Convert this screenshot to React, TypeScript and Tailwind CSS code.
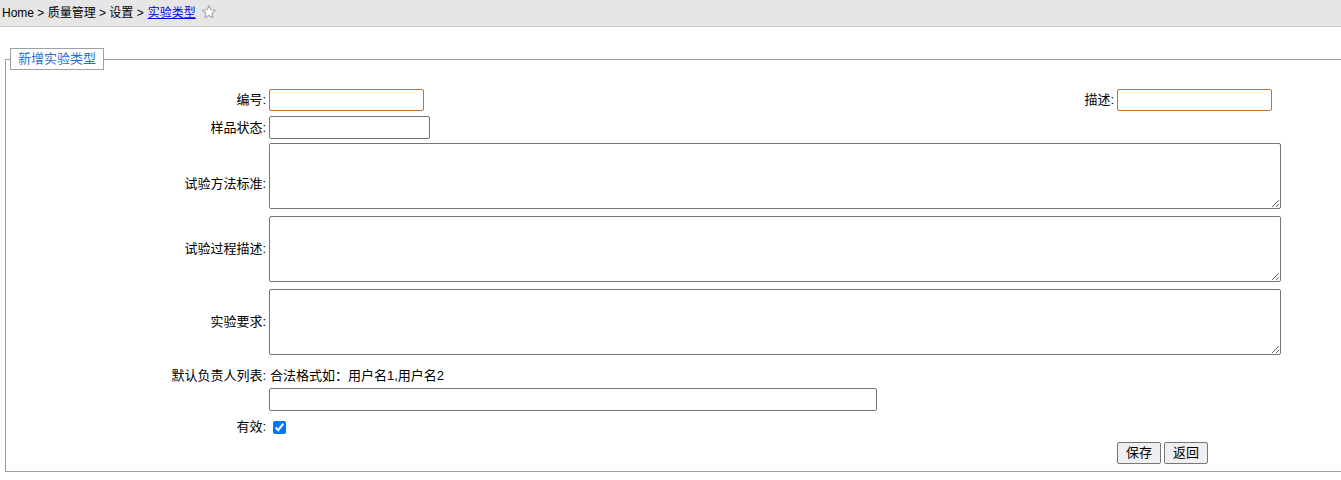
import React from 'react';

const font = { fontFamily: '"Liberation Sans", "Noto Sans CJK SC", sans-serif' };

const Label = ({ text, className = '' }: { text: string; className?: string }) => (
    <span className={`w-[260px] shrink-0 text-right text-[13px] text-black ${className}`}>{text}</span>
);

export default function App() {
    return (
        <div className="w-[1341px] h-[480px] overflow-hidden bg-white text-[12px] text-black" style={font}>
            {/* breadcrumb bar */}
            <div className="h-[27px] bg-[#e6e6e6] border-b border-[#cccccc] flex items-center pl-[2px]">
                <span>Home &gt; 质量管理 &gt; 设置 &gt; </span>
                <a className="ml-[4px] text-[#0000ee] underline decoration-[#0000ee]">实验类型</a>
                <svg width="16" height="16" viewBox="0 0 24 24" className="ml-[5px] -mt-[3px]">
                    <path
                        d="M12 2.5l2.9 6.1 6.6.8-4.9 4.6 1.3 6.6L12 17.3l-5.9 3.3 1.3-6.6-4.9-4.6 6.6-.8z"
                        fill="#ffffff"
                        stroke="#a8a8a8"
                        strokeWidth="1.8"
                        strokeLinejoin="round"
                    />
                </svg>
            </div>

            <fieldset className="ml-[5px] mt-[21px] w-[1360px] border border-[#a0a0a0]">
                <legend className="ml-[4px] px-[7px] h-[22px] leading-[20px] border border-[#a0a0a0] text-[13px] text-[#1f6fd6] bg-white">
                    新增实验类型
                </legend>

                <div className="flex flex-col pt-[19px] pb-[7px]">
                    {/* 编号 / 描述 */}
                    <div className="flex items-center gap-[3px] h-[22px]">
                        <Label text="编号:" />
                        <input className="w-[155px] h-[22px] border border-[#c2702c] rounded-[2px]" />
                        <span className="w-[687px] text-right text-[13px]">描述:</span>
                        <input className="w-[155px] h-[22px] border border-[#c2702c] rounded-[2px]" />
                    </div>

                    <div className="flex items-center gap-[3px] h-[23px] mt-[5px]">
                        <Label text="样品状态:" />
                        <input className="w-[161px] h-[23px] border border-[#767676] rounded-[2px]" />
                    </div>

                    <div className="flex items-center gap-[3px] mt-[4px]">
                        <Label text="试验方法标准:" className="pt-[16px]" />
                        <textarea className="w-[1012px] h-[66px] border border-[#767676] rounded-[2px]" />
                    </div>

                    <div className="flex items-center gap-[3px] mt-[7px]">
                        <Label text="试验过程描述:" />
                        <textarea className="w-[1012px] h-[66px] border border-[#767676] rounded-[2px]" />
                    </div>

                    <div className="flex items-center gap-[3px] mt-[7px]">
                        <Label text="实验要求:" />
                        <textarea className="w-[1012px] h-[66px] border border-[#767676] rounded-[2px]" />
                    </div>

                    <div className="flex items-center gap-[4px] h-[16px] mt-[13px]">
                        <Label text="默认负责人列表:" />
                        <span className="text-[13px]">合法格式如：用户名1,用户名2</span>
                    </div>

                    <div className="flex items-center gap-[3px] mt-[4px]">
                        <span className="w-[260px] shrink-0" />
                        <input className="w-[608px] h-[23px] border border-[#767676] rounded-[2px]" />
                    </div>

                    <div className="flex items-center gap-[3px] h-[16px] mt-[8px]">
                        <Label text="有效:" />
                        <input type="checkbox" defaultChecked className="ml-[4px] w-[13px] h-[13px] accent-[#0075ff]" />
                    </div>

                    <div className="flex gap-[3px] mt-[7px] pl-[1111px]">
                        <button className="h-[22px] px-[8px] text-[13px] bg-[#efefef] border border-[#767676] rounded-[2px]">保存</button>
                        <button className="h-[22px] px-[8px] text-[13px] bg-[#efefef] border border-[#767676] rounded-[2px]">返回</button>
                    </div>
                </div>
            </fieldset>
        </div>
    );
}
